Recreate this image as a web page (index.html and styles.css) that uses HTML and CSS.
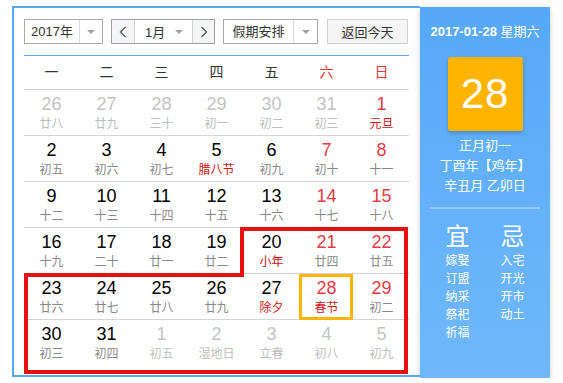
FILE: index.html
```html
<!DOCTYPE html>
<html lang="zh-CN">

<head>
    <meta charset="UTF-8">
    <title>万年历</title>
    <link rel="stylesheet" href="styles.css">
</head>

<body>
    <div class="calendar">
        <div class="main">
            <div class="toolbar">
                <div class="select year">
                    <span class="value">2017年</span>
                    <span class="caret-box"><span class="caret"></span></span>
                </div>
                <div class="month-group">
                    <span class="nav prev">
                        <svg width="8" height="12" viewBox="0 0 8 12"><polyline points="6.5,1 1.5,6 6.5,11" /></svg>
                    </span>
                    <div class="month">
                        <span>1月</span>
                        <span class="caret"></span>
                    </div>
                    <span class="nav next">
                        <svg width="8" height="12" viewBox="0 0 8 12"><polyline points="1.5,1 6.5,6 1.5,11" /></svg>
                    </span>
                </div>
                <div class="select holiday">
                    <span class="value">假期安排</span>
                    <span class="caret-box"><span class="caret"></span></span>
                </div>
                <button class="today-btn">返回今天</button>
            </div>

            <div class="weekdays">
                <span>一</span><span>二</span><span>三</span><span>四</span><span>五</span>
                <span class="wk">六</span><span class="wk">日</span>
            </div>

            <div class="days">
                <div class="day other"><span class="num">26</span><span class="lunar">廿八</span></div>
                <div class="day other"><span class="num">27</span><span class="lunar">廿九</span></div>
                <div class="day other"><span class="num">28</span><span class="lunar">三十</span></div>
                <div class="day other"><span class="num">29</span><span class="lunar">初一</span></div>
                <div class="day other"><span class="num">30</span><span class="lunar">初二</span></div>
                <div class="day other"><span class="num">31</span><span class="lunar">初三</span></div>
                <div class="day wk"><span class="num">1</span><span class="lunar fest">元旦</span></div>

                <div class="day"><span class="num">2</span><span class="lunar">初五</span></div>
                <div class="day"><span class="num">3</span><span class="lunar">初六</span></div>
                <div class="day"><span class="num">4</span><span class="lunar">初七</span></div>
                <div class="day"><span class="num">5</span><span class="lunar fest">腊八节</span></div>
                <div class="day"><span class="num">6</span><span class="lunar">初九</span></div>
                <div class="day wk"><span class="num">7</span><span class="lunar">初十</span></div>
                <div class="day wk"><span class="num">8</span><span class="lunar">十一</span></div>

                <div class="day"><span class="num">9</span><span class="lunar">十二</span></div>
                <div class="day"><span class="num">10</span><span class="lunar">十三</span></div>
                <div class="day"><span class="num">11</span><span class="lunar">十四</span></div>
                <div class="day"><span class="num">12</span><span class="lunar">十五</span></div>
                <div class="day"><span class="num">13</span><span class="lunar">十六</span></div>
                <div class="day wk"><span class="num">14</span><span class="lunar">十七</span></div>
                <div class="day wk"><span class="num">15</span><span class="lunar">十八</span></div>

                <div class="day"><span class="num">16</span><span class="lunar">十九</span></div>
                <div class="day"><span class="num">17</span><span class="lunar">二十</span></div>
                <div class="day"><span class="num">18</span><span class="lunar">廿一</span></div>
                <div class="day"><span class="num">19</span><span class="lunar">廿二</span></div>
                <div class="day"><span class="num">20</span><span class="lunar fest">小年</span></div>
                <div class="day wk"><span class="num">21</span><span class="lunar">廿四</span></div>
                <div class="day wk"><span class="num">22</span><span class="lunar">廿五</span></div>

                <div class="day"><span class="num">23</span><span class="lunar">廿六</span></div>
                <div class="day"><span class="num">24</span><span class="lunar">廿七</span></div>
                <div class="day"><span class="num">25</span><span class="lunar">廿八</span></div>
                <div class="day"><span class="num">26</span><span class="lunar">廿九</span></div>
                <div class="day"><span class="num">27</span><span class="lunar fest">除夕</span></div>
                <div class="day wk today"><span class="num">28</span><span class="lunar fest">春节</span></div>
                <div class="day wk"><span class="num">29</span><span class="lunar">初二</span></div>

                <div class="day"><span class="num">30</span><span class="lunar">初三</span></div>
                <div class="day"><span class="num">31</span><span class="lunar">初四</span></div>
                <div class="day other"><span class="num">1</span><span class="lunar">初五</span></div>
                <div class="day other"><span class="num">2</span><span class="lunar">湿地日</span></div>
                <div class="day other"><span class="num">3</span><span class="lunar">立春</span></div>
                <div class="day other"><span class="num">4</span><span class="lunar">初八</span></div>
                <div class="day other"><span class="num">5</span><span class="lunar">初九</span></div>
            </div>

            <!-- 红色圈注 -->
            <svg class="mark" width="406" height="369">
                <path d="M228,221 H392 V364 H12 V267 H228 Z" />
            </svg>
        </div>

        <div class="side">
            <div class="side-date"><b>2017-01-28</b> 星期六</div>
            <div class="big-day">28</div>
            <div class="lunar-info">
                <div>正月初一</div>
                <div>丁酉年【鸡年】</div>
                <div>辛丑月 乙卯日</div>
            </div>
            <div class="sep"></div>
            <div class="yiji">
                <div>
                    <h3>宜</h3>
                    <ul>
                        <li>嫁娶</li>
                        <li>订盟</li>
                        <li>纳采</li>
                        <li>祭祀</li>
                        <li>祈福</li>
                    </ul>
                </div>
                <div>
                    <h3>忌</h3>
                    <ul>
                        <li>入宅</li>
                        <li>开光</li>
                        <li>开市</li>
                        <li>动土</li>
                    </ul>
                </div>
            </div>
        </div>
    </div>
</body>

</html>
```

FILE: styles.css
```css
body {
    margin: 0;
    font-family: "Liberation Sans", "Noto Sans CJK SC", sans-serif;
    background: #fff;
}

.calendar {
    display: flex;
    align-items: flex-start;
    margin: 6px 0 0 12px;
}

.main {
    position: relative;
    box-sizing: border-box;
    width: 408px;
    height: 371px;
    border: 2px solid #5aa8f5;
    border-right: none;
    padding: 11px 11px 0 10px;
}

/* 工具栏 */
.toolbar {
    display: flex;
    height: 25px;
    font-size: 13px;
    color: #333;
}

.select {
    display: flex;
    box-sizing: border-box;
    height: 25px;
    border: 1px solid #a9a9a9;
    background: #fff;
}

.select .value {
    text-align: center;
    line-height: 23px;
    border-right: 1px solid #dcdcdc;
}

.year {
    width: 79px;
}

.year .value {
    width: 54px;
}

.holiday {
    width: 95px;
    margin-left: 8px;
}

.holiday .value {
    width: 69px;
}

.caret-box {
    flex: 1;
    display: flex;
    align-items: center;
    justify-content: center;
}

.caret {
    width: 0;
    height: 0;
    border-top: 4px solid #a0a0a0;
    border-left: 4px solid transparent;
    border-right: 4px solid transparent;
}

.month-group {
    display: flex;
    box-sizing: border-box;
    width: 104px;
    height: 25px;
    margin-left: 8px;
    border: 1px solid #a0a0a0;
}

.nav {
    display: flex;
    align-items: center;
    justify-content: center;
    background: #f5f5f5;
}

.nav polyline {
    fill: none;
    stroke: #4d5a6e;
    stroke-width: 1.3;
}

.prev {
    width: 22px;
    border-right: 1px solid #d0d0d0;
}

.next {
    width: 21px;
}

.month {
    display: flex;
    align-items: center;
    justify-content: space-between;
    width: 58px;
    padding: 0 9px 0 10px;
    box-sizing: border-box;
    border-right: 1px solid #d0d0d0;
    background: #fff;
}

.today-btn {
    box-sizing: border-box;
    width: 81px;
    height: 25px;
    margin-left: 9px;
    padding: 0;
    border: 1px solid #d0d0d0;
    background: #f5f5f5;
    font-family: inherit;
    font-size: 13px;
    color: #333;
}

/* 星期 */
.weekdays {
    display: grid;
    grid-template-columns: repeat(7, 55px);
    margin-top: 11px;
    border-top: 1px solid #5aa8f5;
    border-bottom: 1px solid #cfcfcf;
    line-height: 33px;
    font-size: 14px;
    text-align: center;
    color: #333;
}

.weekdays .wk {
    color: #e8333b;
}

/* 日期 */
.days {
    display: grid;
    grid-template-columns: repeat(7, 55px);
}

.day {
    position: relative;
    box-sizing: border-box;
    height: 46px;
    padding-top: 4px;
    border-bottom: 1px solid #d4d4d4;
    text-align: center;
}

.day:nth-child(n+36) {
    border-bottom: none;
}

.num {
    display: block;
    font-size: 18px;
    line-height: 21px;
    color: #000;
}

.lunar {
    display: block;
    font-size: 12px;
    line-height: 18px;
    color: #888;
}

.day.wk .num {
    color: #ea3a44;
}

.lunar.fest {
    color: #d81414;
}

.day.other .num {
    color: #c3c3c3;
}

.day.other .lunar {
    color: #bdbdbd;
}

.day.today::after {
    content: "";
    position: absolute;
    top: 0;
    left: 0;
    right: 1px;
    bottom: -1px;
    border: 3px solid #ffb400;
}

.mark {
    position: absolute;
    top: 0;
    left: 0;
    pointer-events: none;
}

.mark path {
    fill: none;
    stroke: #e80f0f;
    stroke-width: 4;
}

/* 右侧面板 */
.side {
    display: flex;
    flex-direction: column;
    align-items: center;
    box-sizing: border-box;
    width: 130px;
    height: 371px;
    margin-top: 1px;
    padding-top: 15px;
    background: linear-gradient(#57a8f9, #70b8fb);
    box-shadow: 0 3px 6px rgba(40, 80, 130, 0.25);
    color: #fff;
}

.side-date {
    font-size: 13px;
    line-height: 20px;
}

.big-day {
    width: 75px;
    height: 74px;
    margin-top: 15px;
    background: #ffb400;
    border-radius: 3px;
    box-shadow: 0 2px 4px rgba(0, 0, 0, 0.2);
    font-size: 42px;
    line-height: 74px;
    letter-spacing: 1px;
    text-align: center;
}

.lunar-info {
    margin-top: 5px;
    font-size: 13px;
    line-height: 20px;
    text-align: center;
}

.sep {
    width: 110px;
    height: 2px;
    margin-top: 11px;
    background: rgba(255, 255, 255, 0.3);
}

.yiji {
    display: grid;
    grid-template-columns: 55px 55px;
    margin-top: 13px;
    text-align: center;
}

.yiji h3 {
    margin: 0;
    font-size: 24px;
    line-height: 30px;
    font-weight: normal;
}

.yiji ul {
    margin: 0;
    padding: 0;
    list-style: none;
}

.yiji li {
    font-size: 12px;
    line-height: 18px;
}
```
